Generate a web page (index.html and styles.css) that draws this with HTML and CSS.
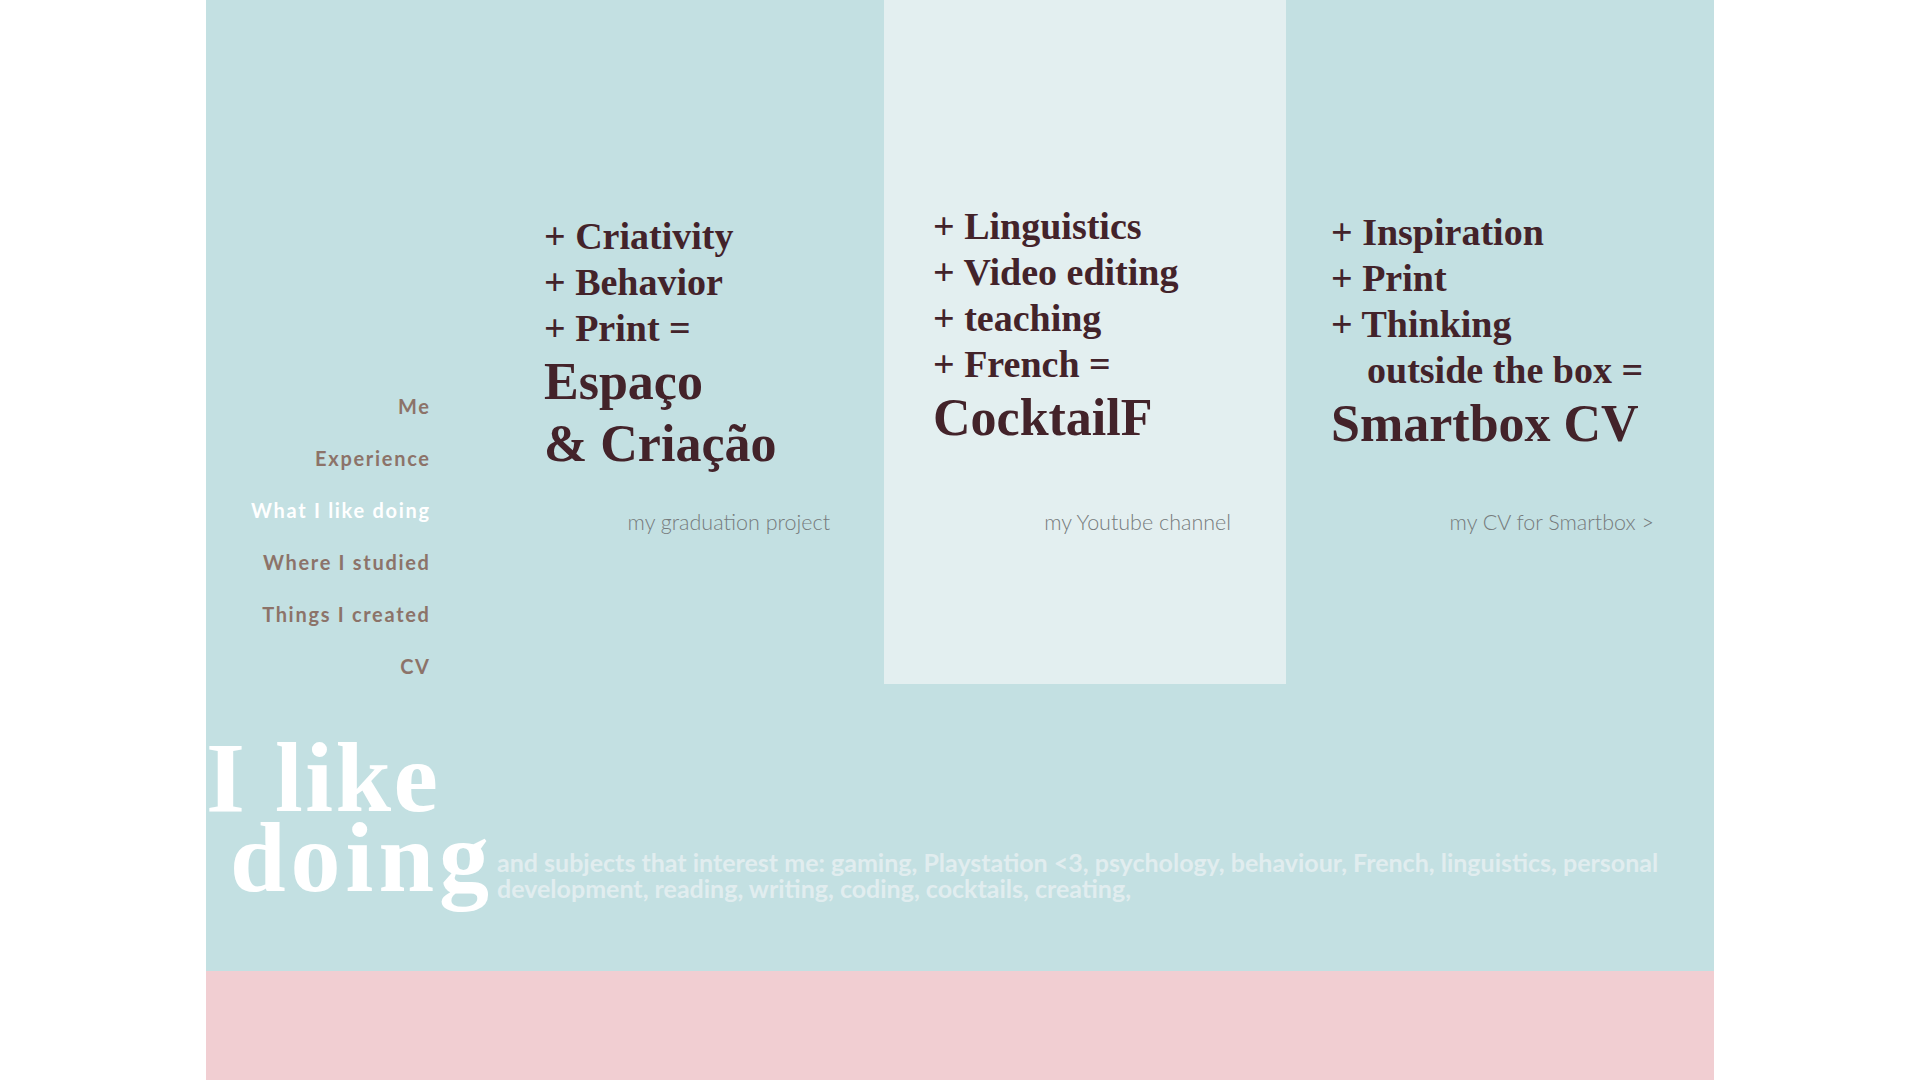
FILE: index.html
```html
<!DOCTYPE html>
<html lang="en">
<head>
<meta charset="utf-8">
<title>What I like doing</title>
<link rel="stylesheet" href="styles.css">
</head>
<body>
<div class="page">
  <section class="top">
    <nav class="nav">
      <a class="nav-item" href="#">Me</a>
      <a class="nav-item" href="#">Experience</a>
      <a class="nav-item is-active" href="#">What I like doing</a>
      <a class="nav-item" href="#">Where I studied</a>
      <a class="nav-item" href="#">Things I created</a>
      <a class="nav-item" href="#">CV</a>
    </nav>

    <div class="col col-1">
      <div class="pitch">
        <p class="line">+ Criativity</p>
        <p class="line">+ Behavior</p>
        <p class="line">+ Print =</p>
        <p class="big">Espaço</p>
        <p class="big">&amp; Criação</p>
      </div>
      <a class="desc" href="#">my graduation project</a>
    </div>

    <div class="col col-2">
      <div class="pitch">
        <p class="line">+ Linguistics</p>
        <p class="line">+ Video editing</p>
        <p class="line">+ teaching</p>
        <p class="line">+ French =</p>
        <p class="big">CocktailF</p>
      </div>
      <a class="desc" href="#">my Youtube channel</a>
    </div>

    <div class="col col-3">
      <div class="pitch">
        <p class="line">+ Inspiration</p>
        <p class="line">+ Print</p>
        <p class="line">+ Thinking</p>
        <p class="line line-indent">outside the box =</p>
        <p class="big">Smartbox CV</p>
      </div>
      <a class="desc" href="#">my CV for Smartbox &gt;</a>
    </div>
  </section>

  <section class="like">
    <h1 class="like-title"><span class="like-l1">I like</span><span class="like-l2">doing</span></h1>
    <p class="like-text">and subjects that interest me: gaming, Playstation &lt;3, psychology, behaviour, French, linguistics, personal development, reading, writing, coding, cocktails, creating,</p>
  </section>

  <section class="pink"></section>
</div>
</body>
</html>
```

FILE: styles.css
```css
html, body {
  margin: 0;
  padding: 0;
  background: #ffffff;
}

.page {
  width: 1508px;
  margin: 0 auto;
}

p { margin: 0; }
a { text-decoration: none; }

/* ---------- top area ---------- */
.top {
  display: grid;
  grid-template-columns: 276px 402px 402px 428px;
  grid-template-rows: 684px;
  height: 684px;
  background: #c3e0e2;
}

.nav {
  display: flex;
  flex-direction: column;
  align-items: flex-end;
  padding: 380px 53px 0 0;
  min-height: 0;
}

.nav-item {
  font-family: "Lato", "Open Sans", sans-serif;
  font-weight: 700;
  font-size: 20px;
  line-height: 52px;
  letter-spacing: 1.7px;
  color: #8c7369;
  margin-right: -1.7px;
}

.nav-item.is-active {
  color: #ffffff;
}

.col {
  display: grid;
  grid-template-rows: 509px auto;
  min-height: 0;
}

.col-2 {
  background: #e3eff0;
}

.pitch {
  font-family: "Liberation Serif", "Times New Roman", serif;
  font-weight: 700;
  color: #43232a;
}

.line {
  font-size: 38px;
  line-height: 46px;
}

.line-indent {
  padding-left: 36px;
}

.big {
  font-size: 52px;
  line-height: 62px;
}

.col-1 .pitch { padding: 213px 0 0 62px; }
.col-2 .pitch { padding: 203px 0 0 49px; }
.col-3 .pitch { padding: 209px 0 0 45px; }

.desc {
  justify-self: end;
  align-self: start;
  font-family: "Lato", "Open Sans", sans-serif;
  font-weight: 300;
  font-size: 21.5px;
  line-height: 26px;
  color: #767b7c;
}

.col-1 .desc { margin-right: 54px; }
.col-2 .desc { margin-right: 55px; }
.col-3 .desc { margin-right: 60px; }

/* ---------- I like doing ---------- */
.like {
  display: flex;
  align-items: flex-start;
  height: 287px;
  box-sizing: border-box;
  padding-top: 54px;
  background: #c3e0e2;
}

.like-title {
  flex: 0 0 291px;
  margin: 0;
  font-family: "Liberation Serif", "Times New Roman", serif;
  font-weight: 700;
  font-size: 100px;
  line-height: 80px;
  letter-spacing: 2.5px;
  color: #ffffff;
  white-space: nowrap;
}

.like-l1,
.like-l2 {
  display: block;
}

.like-l2 {
  padding-left: 24px;
  letter-spacing: 5px;
}

.like-text {
  width: 1200px;
  margin-top: 111px;
  font-family: "Lato", "Open Sans", sans-serif;
  font-weight: 700;
  font-size: 25px;
  line-height: 26px;
  color: #e1edef;
}

/* ---------- pink ---------- */
.pink {
  height: 109px;
  background: #f1ced2;
}
```
